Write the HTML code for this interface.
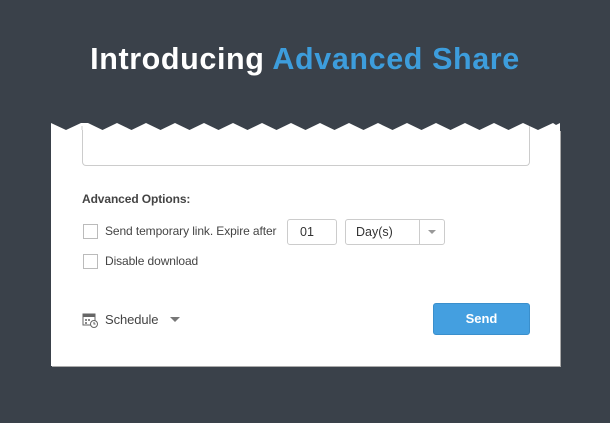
<!DOCTYPE html>
<html><head><meta charset="utf-8"><style>
*{margin:0;padding:0;box-sizing:border-box}
body{width:610px;height:423px;background:#3a414a;position:relative;overflow:hidden;font-family:"Liberation Sans",sans-serif;color:#444}
h1{position:absolute;top:42px;left:0;width:610px;text-align:center;color:#fff;font-size:30.5px;font-weight:bold;letter-spacing:0.6px}
h1 span{color:#3d9ddc}
.card{position:absolute;left:51px;top:130px;width:509px;height:236px;background:#fff;box-shadow:1px 1px 0 #aaa}
.ta{position:absolute;left:31px;top:0;width:448px;height:36px;border:1px solid #ccc;border-top:none;border-radius:0 0 4px 4px}
.lbl{position:absolute;font-size:12px;color:#444;letter-spacing:-0.1px}
.cb{position:absolute;width:15px;height:15px;border:1px solid #bbb}
.box{position:absolute;border:1px solid #ccc;border-radius:3px;font-size:12.5px;color:#333}
.btn{position:absolute;left:382px;top:173px;width:97px;height:32px;background:#449fe0;border:1px solid #3a8fcc;border-radius:3px;color:#fff;font-weight:bold;font-size:13px;text-align:center;line-height:30px}
</style></head><body>
<h1>Introducing <span>Advanced Share</span></h1>
<svg style="position:absolute;left:0;top:0" width="610" height="140">
<polygon fill="#fff" points="51,123 51,140 560,140 560,123 556,125 553,123 538,130 523,123 508.5,130 494,123 479.5,130 465,123 450.5,130 436,123 421.5,130 407,123 392.5,130 378,123 363.5,130 349,123 334.5,130 320,123 305.5,130 291,123 276.5,130 262,123 247.5,130 233,123 218.5,130 204,123 189.5,130 175,123 160.5,130 146,123 131.5,130 117,123 102.5,130 88,123 81,123 66,130"/>
<line x1="82" y1="126" x2="82" y2="140" stroke="#ccc"/>
<line x1="529.5" y1="126" x2="529.5" y2="140" stroke="#ccc"/>
</svg>
<div class="card">
<div class="ta"></div>
<div class="lbl" style="left:31px;top:62px;font-weight:bold;color:#444">Advanced Options:</div>
<div class="cb" style="left:32px;top:94px"></div>
<div class="lbl" style="left:54px;top:94px">Send temporary link. Expire after</div>
<div class="box" style="left:236px;top:89px;width:50px;height:26px;line-height:24px;padding-left:12px">01</div>
<div class="box" style="left:294px;top:89px;width:100px;height:26px;line-height:24px;padding-left:10px">Day(s)
<div style="position:absolute;left:73px;top:0;width:1px;height:24px;background:#ccc"></div>
<div style="position:absolute;left:82px;top:10px;border:4px solid transparent;border-top:4px solid #999"></div></div>
<div class="cb" style="left:32px;top:124px"></div>
<div class="lbl" style="left:54px;top:124px">Disable download</div>
<svg style="position:absolute;left:31px;top:182px" width="16" height="16" viewBox="0 0 16 16"><rect x="1" y="2" width="12" height="11" fill="none" stroke="#666"/><rect x="1" y="2" width="12" height="3" fill="#666"/><g fill="#888"><rect x="3" y="7" width="2" height="2"/><rect x="6" y="7" width="2" height="2"/><rect x="3" y="10" width="2" height="2"/></g><circle cx="12" cy="12" r="3.5" fill="#fff" stroke="#666"/><path d="M12 10v2h1.5" stroke="#666" fill="none"/></svg>
<div class="lbl" style="left:54px;top:182px;font-size:13px">Schedule</div>
<div style="position:absolute;left:119px;top:187px;border:5px solid transparent;border-top:5px solid #777"></div>
<div class="btn">Send</div>
</div>
</body></html>
